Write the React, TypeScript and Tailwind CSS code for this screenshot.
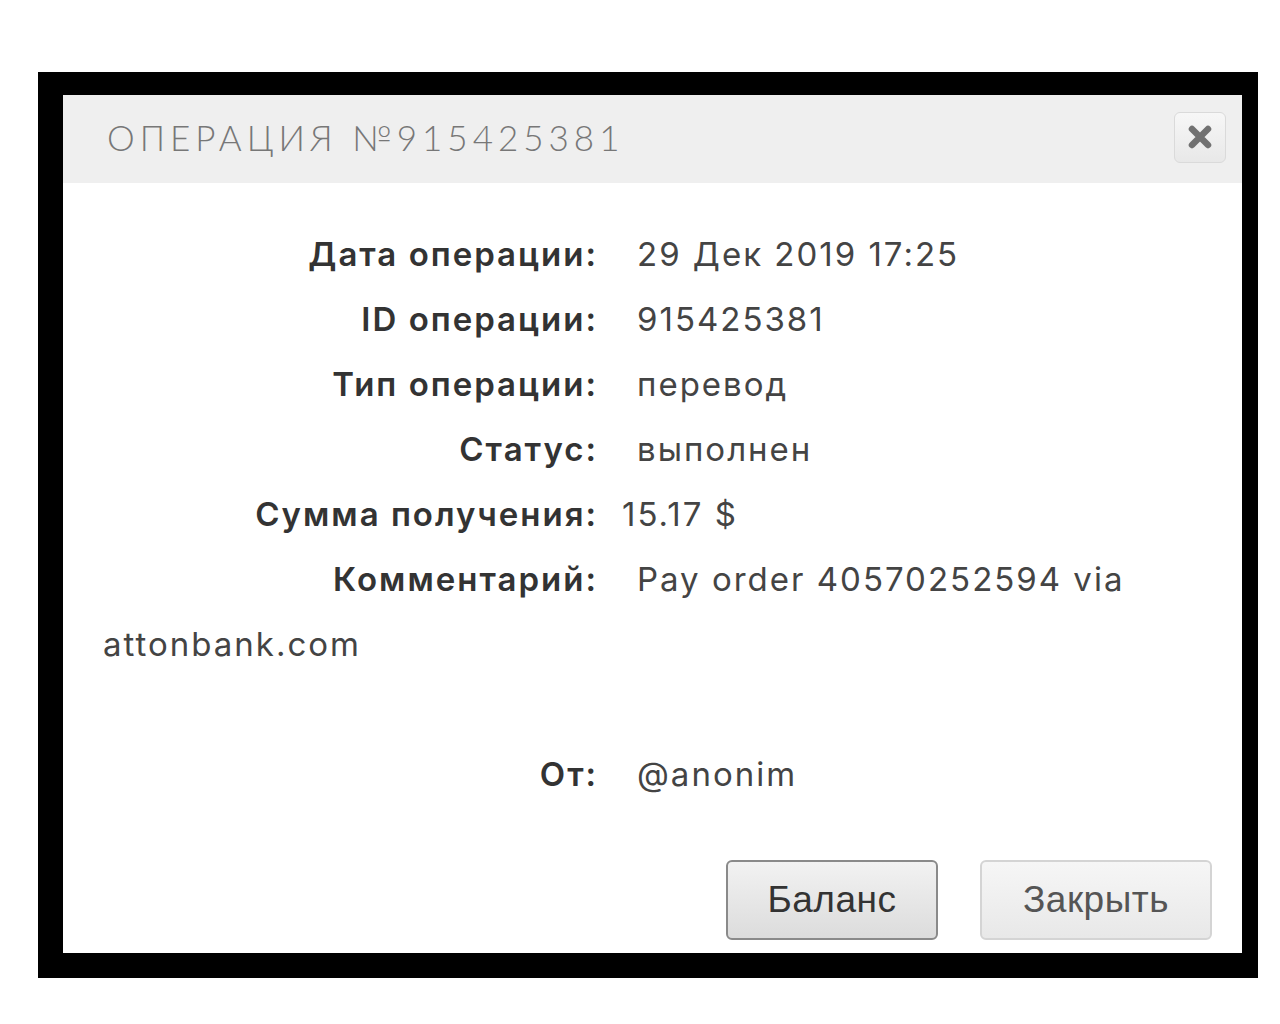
import React from 'react';

type Row = {
  label: string;
  value: React.ReactNode;
  gap?: string;
};

const rows: Row[] = [
  { label: 'Дата операции:', value: '29 Дек 2019 17:25' },
  { label: 'ID операции:', value: '915425381' },
  { label: 'Тип операции:', value: 'перевод' },
  { label: 'Статус:', value: 'выполнен' },
  { label: 'Сумма получения:', value: '15.17 $', gap: 'ml-[24px]' },
  {
    label: 'Комментарий:',
    value: (
      <>
        Pay order 40570252594 via
        <br />
        attonbank.com
      </>
    ),
  },
];

function CloseIcon() {
  return (
    <svg width="26" height="26" viewBox="0 0 26 26">
      <path d="M5 5 L21 21 M21 5 L5 21" stroke="#717171" strokeWidth="6.5" strokeLinecap="round" />
    </svg>
  );
}

function InfoRow({ label, value, gap }: Row) {
  return (
    <p className="leading-[65px]">
      <span className="inline-block w-[495px] text-right font-semibold text-[#333]">{label}</span>
      <span className={`${gap ?? 'ml-[39px]'} text-[#444]`}>{value}</span>
    </p>
  );
}

export default function App() {
  return (
    <div className="min-h-screen bg-white pt-[72px] pl-[38px]">
      <div className="w-[1220px] h-[906px] bg-black pt-[23px] pl-[25px] pr-[16px] pb-[25px]">
        <div className="h-full bg-white flex flex-col">
          <div className="h-[88px] bg-[#efefef] flex items-center justify-between pl-[44px] pr-[16px]">
            <h1
              className="text-[35px] font-light tracking-[5px] text-[#777] -mt-[4px]"
              style={{ fontFamily: 'Lato, "Noto Sans", sans-serif' }}
            >
              ОПЕРАЦИЯ №915425381
            </h1>
            <button className="w-[52px] h-[51px] rounded-md border border-[#dadada] bg-gradient-to-b from-[#f7f7f7] to-[#e8e8e8] flex items-center justify-center -mt-[4px]">
              <CloseIcon />
            </button>
          </div>

          <div
            className="pl-[40px] pr-[40px] pt-[39px] text-[33px] tracking-[2px]"
            style={{ fontFamily: 'Inter, "Noto Sans", sans-serif' }}
          >
            {rows.map((r) => (
              <InfoRow key={r.label} {...r} />
            ))}
            <p className="leading-[65px]">&nbsp;</p>
            <InfoRow label="От:" value="@anonim" />
          </div>

          <div
            className="mt-auto flex justify-end gap-[42px] pr-[30px] pb-[13px]"
            style={{ fontFamily: '"Liberation Sans", Arial, sans-serif' }}
          >
            <button className="w-[212px] h-[80px] rounded-md border-2 border-[#8a8a8a] bg-gradient-to-b from-[#f2f2f2] to-[#dcdcdc] text-[37px] text-[#333] tracking-[0.5px]">
              Баланс
            </button>
            <button className="w-[232px] h-[80px] rounded-md border-2 border-[#d4d4d4] bg-gradient-to-b from-[#f6f6f6] to-[#e8e8e8] text-[37px] text-[#555] tracking-[0.5px]">
              Закрыть
            </button>
          </div>
        </div>
      </div>
    </div>
  );
}
